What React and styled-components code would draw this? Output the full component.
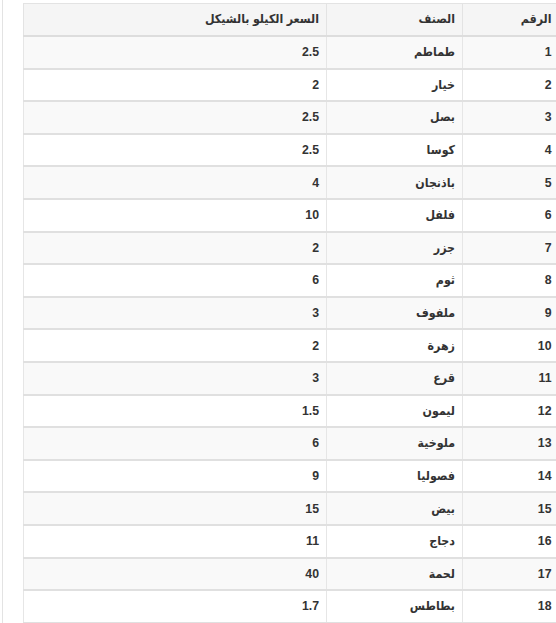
import React from "react";
import styled, { createGlobalStyle } from "styled-components";

const GlobalStyle = createGlobalStyle`
  html, body {
    margin: 0;
    padding: 0;
    background: #fff;
    overflow: hidden;
  }
  body {
    font-family: "Liberation Sans", "DejaVu Sans Condensed", "DejaVu Sans", Arial, sans-serif;
    color: #333;
  }
`;

const Page = styled.div`
  margin-left: 2px;
  border-left: 1px solid #e3e3e3;
  padding: 3px 0 0 20px;
  min-height: 623px;
  box-sizing: border-box;
`;

const Table = styled.table`
  direction: rtl;
  width: 535px;
  border-collapse: collapse;
  border-spacing: 0;
  table-layout: fixed;
  font-size: 12.3px;
  font-weight: bold;
  border-top: 1px solid #e3e3e3;
  border-left: 1px solid #f0f0f0;
`;

const Col = styled.col`
  width: ${(p) => p.$w}px;
`;

const HeadCell = styled.th`
  text-align: right;
  padding: 6px 7px 7px;
  line-height: 18px;
  background: #f5f5f5;
  border-bottom: 2px solid #ddd;
  border-left: 1px solid #e3e3e3;
  font-weight: bold;
`;

const Row = styled.tr`
  background: ${(p) => (p.$striped ? "#f9f9f9" : "#fff")};
`;

const Cell = styled.td`
  text-align: right;
  padding: 6.3px 7px;
  line-height: 18px;
  border-bottom: 2px solid #e0e0e0;
  border-left: 1px solid #e6e6e6;
  white-space: nowrap;
  overflow: hidden;
`;

const items = [
  ["1", "طماطم", "2.5"],
  ["2", "خيار", "2"],
  ["3", "بصل", "2.5"],
  ["4", "كوسا", "2.5"],
  ["5", "باذنجان", "4"],
  ["6", "فلفل", "10"],
  ["7", "جزر", "2"],
  ["8", "ثوم", "6"],
  ["9", "ملفوف", "3"],
  ["10", "زهرة", "2"],
  ["11", "قرع", "3"],
  ["12", "ليمون", "1.5"],
  ["13", "ملوخية", "6"],
  ["14", "فصوليا", "9"],
  ["15", "بيض", "15"],
  ["16", "دجاج", "11"],
  ["17", "لحمة", "40"],
  ["18", "بطاطس", "1.7"],
];

export default function App() {
  return (
    <>
      <GlobalStyle />
      <Page>
        <Table>
          <colgroup>
            <Col $w={96} />
            <Col $w={136} />
            <Col $w={303} />
          </colgroup>
          <thead>
            <tr>
              <HeadCell>الرقم</HeadCell>
              <HeadCell>الصنف</HeadCell>
              <HeadCell>السعر الكيلو بالشيكل</HeadCell>
            </tr>
          </thead>
          <tbody>
            {items.map((item, idx) => (
              <Row key={idx} $striped={idx % 2 === 0}>
                <Cell>{item[0]}</Cell>
                <Cell>{item[1]}</Cell>
                <Cell>{item[2]}</Cell>
              </Row>
            ))}
          </tbody>
        </Table>
      </Page>
    </>
  );
}
